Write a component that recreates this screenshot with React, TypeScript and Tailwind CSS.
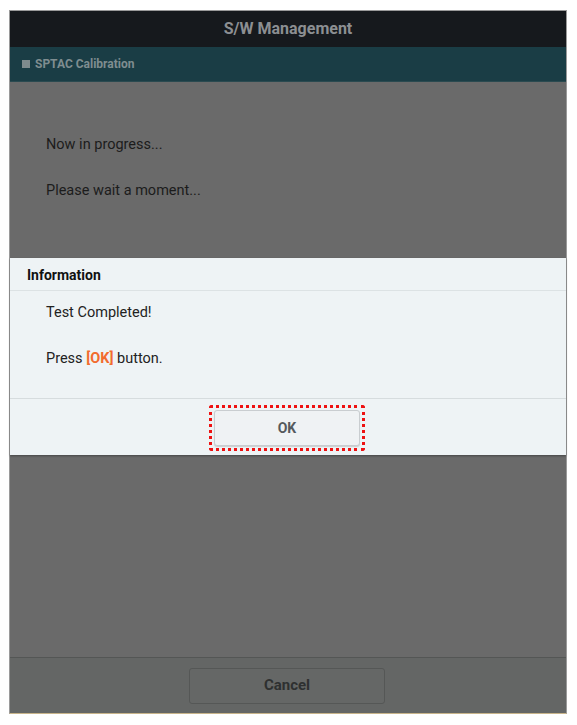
import React from "react";

const App = () => {
  return (
    <div className="w-[577px] h-[725px] bg-white pt-[10px] pl-[9px] font-['Roboto',sans-serif]">
      <div className="w-[558px] h-[704px] flex flex-col border border-[#9a9a9a] border-b-[#c8b48a] bg-[#6a6a6a]">
        <div className="h-[36px] shrink-0 bg-[#16191d] flex items-center justify-center">
          <span className="text-[16px] font-bold text-[#8c8f92]">S/W Management</span>
        </div>
        <div className="h-[35px] shrink-0 bg-[#1a3d45] flex items-center pl-[12px] gap-[5px] border-b border-[#2a4a50]">
          <span className="w-[8px] h-[8px] bg-[#7f8b8d]" />
          <span className="text-[12px] font-bold text-[#7f8d90]">SPTAC Calibration</span>
        </div>
        <div className="flex-1 flex flex-col">
          <div className="pl-[36px] pt-[53px] h-[176px] text-[14.5px] text-[#1c1c1c] leading-[20px]">
            <p>Now in progress...</p>
            <p className="mt-[26px]">Please wait a moment...</p>
          </div>
          <div className="bg-[#eef3f5] shadow-[0_1px_2px_rgba(0,0,0,0.35)]">
            <div className="h-[33px] flex items-center pl-[17px] pt-[2px] border-b border-[#dce2e4]">
              <span className="text-[14px] font-bold text-[#111]">Information</span>
            </div>
            <div className="h-[108px] pl-[36px] pt-[12px] text-[14.5px] text-[#222] leading-[20px] border-b border-[#d6dcde]">
              <p>Test Completed!</p>
              <p className="mt-[26px]">
                Press <span className="font-bold text-[#f26b2e]">[OK]</span> button.
              </p>
            </div>
            <div className="h-[56px] flex items-center justify-center">
              <div className="ml-[-2px] mt-[2px] p-[2px] border-[3px] border-dotted border-[#ee1111] rounded-[3px]">
                <button className="w-[146px] h-[36px] bg-[#eff2f4] border border-[#c9cdd0] rounded-[3px] shadow-[0_1px_1px_rgba(0,0,0,0.15)] text-[14px] font-bold text-[#555a5e]">
                  OK
                </button>
              </div>
            </div>
          </div>
        </div>
        <div className="h-[56px] shrink-0 bg-[#646665] border-t border-[#545655] flex items-center justify-center">
          <button className="ml-[-2px] w-[196px] h-[36px] border border-[#555756] rounded-[3px] bg-[#656766] text-[15px] font-bold text-[#2e3030]">
            Cancel
          </button>
        </div>
      </div>
    </div>
  );
};

export default App;
